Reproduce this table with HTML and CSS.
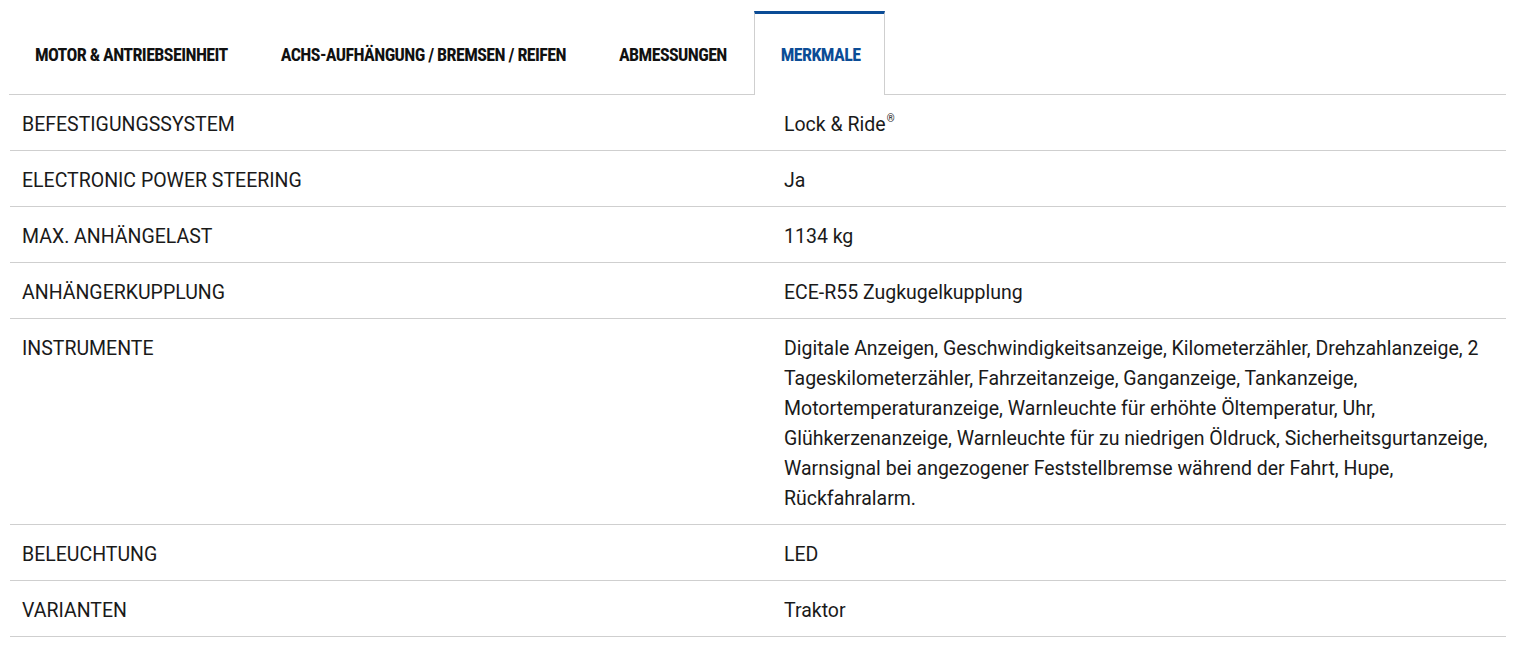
FILE: index.html
```html
<!DOCTYPE html>
<html lang="de">
<head>
<meta charset="utf-8">
<title>Merkmale</title>
<link rel="stylesheet" href="styles.css">
</head>
<body>
<div class="page">
  <div class="tabs">
    <div class="tab">MOTOR &amp; ANTRIEBSEINHEIT</div>
    <div class="tab">ACHS-AUFHÄNGUNG / BREMSEN / REIFEN</div>
    <div class="tab">ABMESSUNGEN</div>
    <div class="tab active">MERKMALE</div>
  </div>
  <div class="specs">
    <div class="row"><div class="label">BEFESTIGUNGSSYSTEM</div><div class="value">Lock &amp; Ride<sup>®</sup></div></div>
    <div class="row"><div class="label">ELECTRONIC POWER STEERING</div><div class="value">Ja</div></div>
    <div class="row"><div class="label">MAX. ANHÄNGELAST</div><div class="value">1134 kg</div></div>
    <div class="row"><div class="label">ANHÄNGERKUPPLUNG</div><div class="value">ECE-R55 Zugkugelkupplung</div></div>
    <div class="row"><div class="label">INSTRUMENTE</div><div class="value">Digitale Anzeigen, Geschwindigkeitsanzeige, Kilometerzähler, Drehzahlanzeige, 2 Tageskilometerzähler, Fahrzeitanzeige, Ganganzeige, Tankanzeige, Motortemperaturanzeige, Warnleuchte für erhöhte Öltemperatur, Uhr, Glühkerzenanzeige, Warnleuchte für zu niedrigen Öldruck, Sicherheitsgurtanzeige, Warnsignal bei angezogener Feststellbremse während der Fahrt, Hupe, Rückfahralarm.</div></div>
    <div class="row"><div class="label">BELEUCHTUNG</div><div class="value">LED</div></div>
    <div class="row"><div class="label">VARIANTEN</div><div class="value">Traktor</div></div>
  </div>
</div>
</body>
</html>
```

FILE: styles.css
```css
html, body {
  margin: 0;
  padding: 0;
  background: #fff;
}
.page {
  padding: 11px 25px 0 10px;
  font-family: "Roboto", "Liberation Sans", sans-serif;
  color: #1a1a1a;
}
.tabs {
  display: flex;
  border-bottom: 1px solid #cfcfcf;
  height: 83px;
  margin-left: -1px;
}
.tab {
  display: flex;
  align-items: center;
  padding: 0 26px 0 25px;
  border: 1px solid transparent;
  border-top-width: 3px;
  border-bottom: 0;
  font-family: "Roboto Condensed", "Liberation Sans Narrow", "Arial Narrow", "DejaVu Sans Condensed", sans-serif;
  font-weight: 700;
  font-size: 18px;
  letter-spacing: -0.6px;
  color: #111;
}
.tab.active {
  border-color: #cfcfcf;
  border-top-color: #0b4c96;
  color: #0b4c96;
  background: #fff;
  margin-bottom: -1px;
  height: 81px;
  padding: 0 24px 0 26px;
}
.specs {
  display: flex;
  flex-direction: column;
}
.row {
  display: grid;
  grid-template-columns: 762px 1fr;
  border-bottom: 1px solid #cfcfcf;
  padding: 15px 0 10px;
  font-size: 19.5px;
  line-height: 30px;
}
.label {
  padding-left: 12px;
}
.value {
  padding: 0 10px 0 12px;
}
sup {
  font-size: 10px;
  line-height: 0;
  vertical-align: 9px;
  margin-left: 1px;
}
```
